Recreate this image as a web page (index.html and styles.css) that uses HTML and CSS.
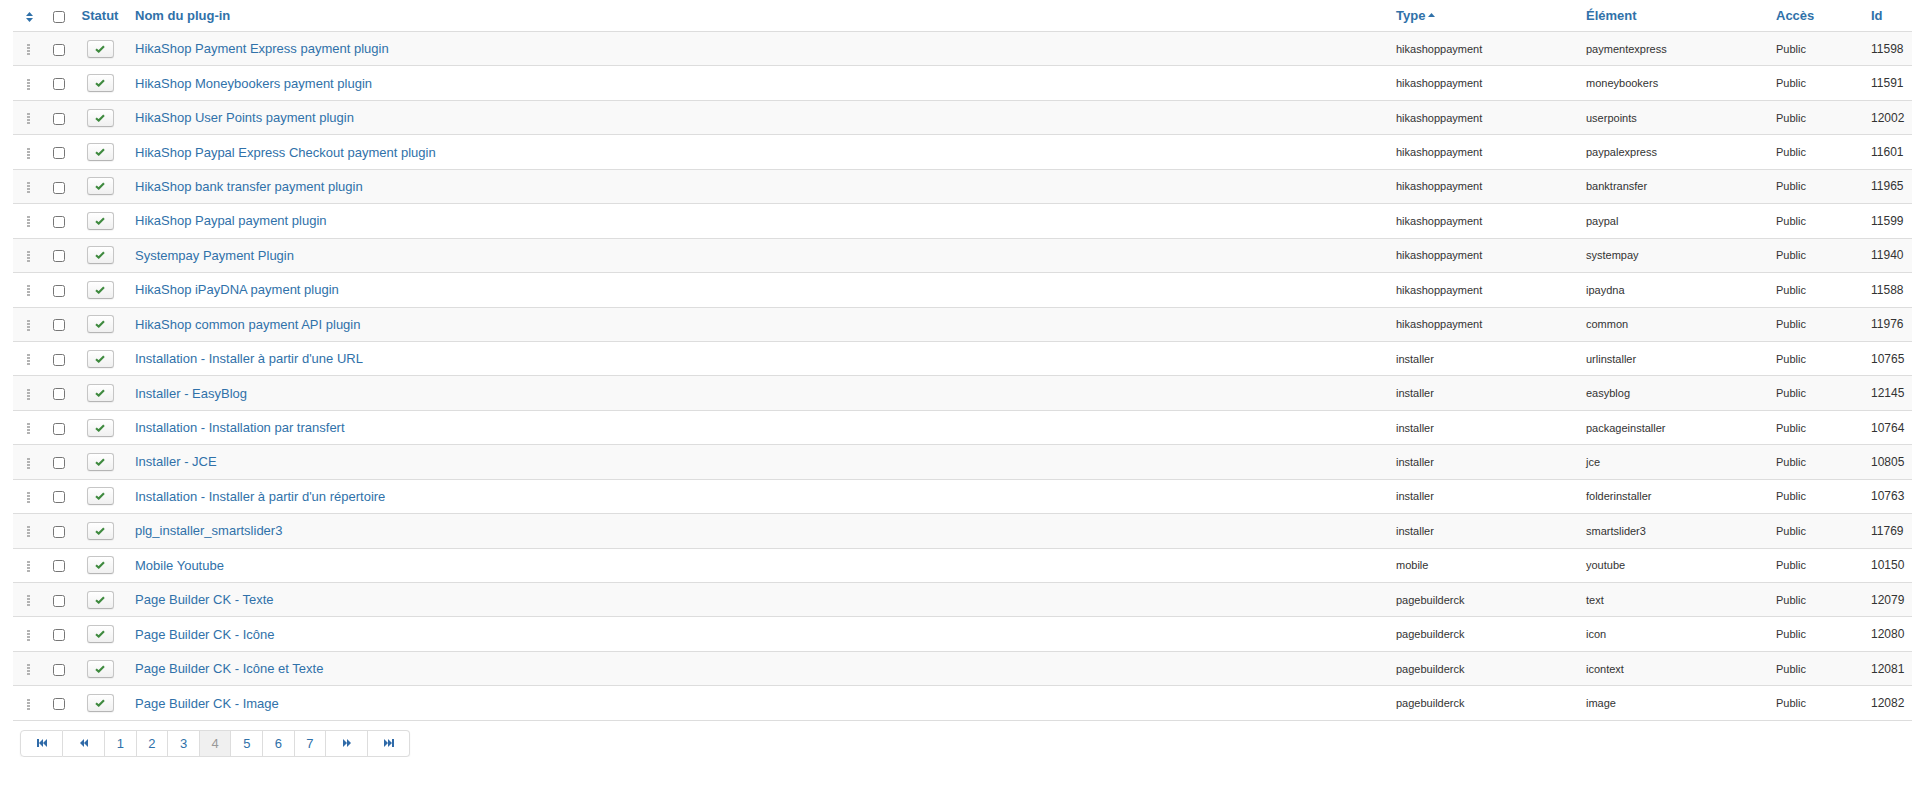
FILE: index.html
```html
<!DOCTYPE html>
<html lang="fr">
<head>
    <meta charset="UTF-8">
    <title>Plug-ins</title>
    <link rel="stylesheet" href="styles.css">
</head>
<body>
    <svg class="defs" width="0" height="0">
        <symbol id="ico-check" viewBox="0 0 10 8">
            <polyline points="1,4.2 3.7,6.6 9,1.2" fill="none" stroke="#3f8a3f" stroke-width="2.1"/>
        </symbol>
        <symbol id="ico-drag" viewBox="0 0 3 11">
            <rect x="0" y="0" width="3" height="2"/>
            <rect x="0" y="3" width="3" height="2"/>
            <rect x="0" y="6" width="3" height="2"/>
            <rect x="0" y="9" width="3" height="2"/>
        </symbol>
    </svg>

    <div class="list-wrap">
        <table class="plugin-list">
            <colgroup>
                <col class="c-order">
                <col class="c-check">
                <col class="c-status">
                <col>
                <col class="c-type">
                <col class="c-elem">
                <col class="c-access">
                <col class="c-id">
            </colgroup>
            <thead>
                <tr>
                    <th class="center">
                        <svg class="sort-ico" width="7" height="10" viewBox="0 0 7 10"><polygon points="3.5,0 7,4 0,4"/><polygon points="0,6 7,6 3.5,10"/></svg>
                    </th>
                    <th class="center"><input type="checkbox"></th>
                    <th class="center">Statut</th>
                    <th>Nom du plug-in</th>
                    <th>Type <svg class="caret" width="7" height="4" viewBox="0 0 7 4"><polygon points="3.5,0 7,4 0,4"/></svg></th>
                    <th>Élément</th>
                    <th>Accès</th>
                    <th>Id</th>
                </tr>
            </thead>
            <tbody>
                <tr><td class="center order"><svg class="drag"><use href="#ico-drag"/></svg></td><td class="center"><input type="checkbox"></td><td class="center"><span class="btn-micro"><svg><use href="#ico-check"/></svg></span></td><td><a href="#">HikaShop Payment Express payment plugin</a></td><td class="small">hikashoppayment</td><td class="small">paymentexpress</td><td class="small">Public</td><td class="id">11598</td></tr>
                <tr><td class="center order"><svg class="drag"><use href="#ico-drag"/></svg></td><td class="center"><input type="checkbox"></td><td class="center"><span class="btn-micro"><svg><use href="#ico-check"/></svg></span></td><td><a href="#">HikaShop Moneybookers payment plugin</a></td><td class="small">hikashoppayment</td><td class="small">moneybookers</td><td class="small">Public</td><td class="id">11591</td></tr>
                <tr><td class="center order"><svg class="drag"><use href="#ico-drag"/></svg></td><td class="center"><input type="checkbox"></td><td class="center"><span class="btn-micro"><svg><use href="#ico-check"/></svg></span></td><td><a href="#">HikaShop User Points payment plugin</a></td><td class="small">hikashoppayment</td><td class="small">userpoints</td><td class="small">Public</td><td class="id">12002</td></tr>
                <tr><td class="center order"><svg class="drag"><use href="#ico-drag"/></svg></td><td class="center"><input type="checkbox"></td><td class="center"><span class="btn-micro"><svg><use href="#ico-check"/></svg></span></td><td><a href="#">HikaShop Paypal Express Checkout payment plugin</a></td><td class="small">hikashoppayment</td><td class="small">paypalexpress</td><td class="small">Public</td><td class="id">11601</td></tr>
                <tr><td class="center order"><svg class="drag"><use href="#ico-drag"/></svg></td><td class="center"><input type="checkbox"></td><td class="center"><span class="btn-micro"><svg><use href="#ico-check"/></svg></span></td><td><a href="#">HikaShop bank transfer payment plugin</a></td><td class="small">hikashoppayment</td><td class="small">banktransfer</td><td class="small">Public</td><td class="id">11965</td></tr>
                <tr><td class="center order"><svg class="drag"><use href="#ico-drag"/></svg></td><td class="center"><input type="checkbox"></td><td class="center"><span class="btn-micro"><svg><use href="#ico-check"/></svg></span></td><td><a href="#">HikaShop Paypal payment plugin</a></td><td class="small">hikashoppayment</td><td class="small">paypal</td><td class="small">Public</td><td class="id">11599</td></tr>
                <tr><td class="center order"><svg class="drag"><use href="#ico-drag"/></svg></td><td class="center"><input type="checkbox"></td><td class="center"><span class="btn-micro"><svg><use href="#ico-check"/></svg></span></td><td><a href="#">Systempay Payment Plugin</a></td><td class="small">hikashoppayment</td><td class="small">systempay</td><td class="small">Public</td><td class="id">11940</td></tr>
                <tr><td class="center order"><svg class="drag"><use href="#ico-drag"/></svg></td><td class="center"><input type="checkbox"></td><td class="center"><span class="btn-micro"><svg><use href="#ico-check"/></svg></span></td><td><a href="#">HikaShop iPayDNA payment plugin</a></td><td class="small">hikashoppayment</td><td class="small">ipaydna</td><td class="small">Public</td><td class="id">11588</td></tr>
                <tr><td class="center order"><svg class="drag"><use href="#ico-drag"/></svg></td><td class="center"><input type="checkbox"></td><td class="center"><span class="btn-micro"><svg><use href="#ico-check"/></svg></span></td><td><a href="#">HikaShop common payment API plugin</a></td><td class="small">hikashoppayment</td><td class="small">common</td><td class="small">Public</td><td class="id">11976</td></tr>
                <tr><td class="center order"><svg class="drag"><use href="#ico-drag"/></svg></td><td class="center"><input type="checkbox"></td><td class="center"><span class="btn-micro"><svg><use href="#ico-check"/></svg></span></td><td><a href="#">Installation - Installer à partir d'une URL</a></td><td class="small">installer</td><td class="small">urlinstaller</td><td class="small">Public</td><td class="id">10765</td></tr>
                <tr><td class="center order"><svg class="drag"><use href="#ico-drag"/></svg></td><td class="center"><input type="checkbox"></td><td class="center"><span class="btn-micro"><svg><use href="#ico-check"/></svg></span></td><td><a href="#">Installer - EasyBlog</a></td><td class="small">installer</td><td class="small">easyblog</td><td class="small">Public</td><td class="id">12145</td></tr>
                <tr><td class="center order"><svg class="drag"><use href="#ico-drag"/></svg></td><td class="center"><input type="checkbox"></td><td class="center"><span class="btn-micro"><svg><use href="#ico-check"/></svg></span></td><td><a href="#">Installation - Installation par transfert</a></td><td class="small">installer</td><td class="small">packageinstaller</td><td class="small">Public</td><td class="id">10764</td></tr>
                <tr><td class="center order"><svg class="drag"><use href="#ico-drag"/></svg></td><td class="center"><input type="checkbox"></td><td class="center"><span class="btn-micro"><svg><use href="#ico-check"/></svg></span></td><td><a href="#">Installer - JCE</a></td><td class="small">installer</td><td class="small">jce</td><td class="small">Public</td><td class="id">10805</td></tr>
                <tr><td class="center order"><svg class="drag"><use href="#ico-drag"/></svg></td><td class="center"><input type="checkbox"></td><td class="center"><span class="btn-micro"><svg><use href="#ico-check"/></svg></span></td><td><a href="#">Installation - Installer à partir d'un répertoire</a></td><td class="small">installer</td><td class="small">folderinstaller</td><td class="small">Public</td><td class="id">10763</td></tr>
                <tr><td class="center order"><svg class="drag"><use href="#ico-drag"/></svg></td><td class="center"><input type="checkbox"></td><td class="center"><span class="btn-micro"><svg><use href="#ico-check"/></svg></span></td><td><a href="#">plg_installer_smartslider3</a></td><td class="small">installer</td><td class="small">smartslider3</td><td class="small">Public</td><td class="id">11769</td></tr>
                <tr><td class="center order"><svg class="drag"><use href="#ico-drag"/></svg></td><td class="center"><input type="checkbox"></td><td class="center"><span class="btn-micro"><svg><use href="#ico-check"/></svg></span></td><td><a href="#">Mobile Youtube</a></td><td class="small">mobile</td><td class="small">youtube</td><td class="small">Public</td><td class="id">10150</td></tr>
                <tr><td class="center order"><svg class="drag"><use href="#ico-drag"/></svg></td><td class="center"><input type="checkbox"></td><td class="center"><span class="btn-micro"><svg><use href="#ico-check"/></svg></span></td><td><a href="#">Page Builder CK - Texte</a></td><td class="small">pagebuilderck</td><td class="small">text</td><td class="small">Public</td><td class="id">12079</td></tr>
                <tr><td class="center order"><svg class="drag"><use href="#ico-drag"/></svg></td><td class="center"><input type="checkbox"></td><td class="center"><span class="btn-micro"><svg><use href="#ico-check"/></svg></span></td><td><a href="#">Page Builder CK - Icône</a></td><td class="small">pagebuilderck</td><td class="small">icon</td><td class="small">Public</td><td class="id">12080</td></tr>
                <tr><td class="center order"><svg class="drag"><use href="#ico-drag"/></svg></td><td class="center"><input type="checkbox"></td><td class="center"><span class="btn-micro"><svg><use href="#ico-check"/></svg></span></td><td><a href="#">Page Builder CK - Icône et Texte</a></td><td class="small">pagebuilderck</td><td class="small">icontext</td><td class="small">Public</td><td class="id">12081</td></tr>
                <tr><td class="center order"><svg class="drag"><use href="#ico-drag"/></svg></td><td class="center"><input type="checkbox"></td><td class="center"><span class="btn-micro"><svg><use href="#ico-check"/></svg></span></td><td><a href="#">Page Builder CK - Image</a></td><td class="small">pagebuilderck</td><td class="small">image</td><td class="small">Public</td><td class="id">12082</td></tr>
            </tbody>
        </table>

        <!-- pagination -->
        <ul class="pagination">
            <li><a href="#" class="nav-ico"><svg width="10" height="8" viewBox="0 0 10 8"><rect x="0" y="0" width="2" height="8"/><polygon points="2,4 6,0 6,8"/><polygon points="6,4 10,0 10,8"/></svg></a></li>
            <li><a href="#" class="nav-ico"><svg width="8" height="8" viewBox="0 0 8 8"><polygon points="0,4 4,0 4,8"/><polygon points="4,4 8,0 8,8"/></svg></a></li>
            <li><a href="#">1</a></li>
            <li><a href="#">2</a></li>
            <li><a href="#">3</a></li>
            <li><span class="active">4</span></li>
            <li><a href="#">5</a></li>
            <li><a href="#">6</a></li>
            <li><a href="#">7</a></li>
            <li><a href="#" class="nav-ico"><svg width="8" height="8" viewBox="0 0 8 8"><polygon points="0,0 4,4 0,8"/><polygon points="4,0 8,4 4,8"/></svg></a></li>
            <li><a href="#" class="nav-ico"><svg width="10" height="8" viewBox="0 0 10 8"><polygon points="0,0 4,4 0,8"/><polygon points="4,0 8,4 4,8"/><rect x="8" y="0" width="2" height="8"/></svg></a></li>
        </ul>
    </div>
</body>
</html>
```

FILE: styles.css
```css
body {
    margin: 0;
    font-family: 'Liberation Sans', Arial, sans-serif;
    font-size: 13px;
    color: #333;
    background-color: #fff;
}

a {
    color: #3071a9;
    text-decoration: none;
}

.defs {
    position: absolute;
}

.list-wrap {
    padding: 0 7px 0 13px;
}

.plugin-list {
    width: 100%;
    border-collapse: collapse;
    table-layout: fixed;
}

.c-order { width: 32px; }
.c-check { width: 28px; }
.c-status { width: 54px; }
.c-type { width: 190px; }
.c-elem { width: 190px; }
.c-access { width: 95px; }
.c-id { width: 49px; }

.plugin-list th {
    height: 31px;
    padding: 0 8px;
    text-align: left;
    vertical-align: middle;
    font-weight: bold;
    color: #3071a9;
    white-space: nowrap;
}

.plugin-list td {
    height: 34.45px;
    padding: 0 8px;
    vertical-align: middle;
    border-top: 1px solid #ddd;
    white-space: nowrap;
    box-sizing: border-box;
}

.plugin-list tbody tr:nth-child(odd) td {
    background-color: #f9f9f9;
}

.plugin-list tbody tr:last-child td {
    border-bottom: 1px solid #ddd;
}

.plugin-list .center {
    text-align: center;
    padding: 0;
}

.plugin-list .order {
    padding-right: 2px;
}

.plugin-list input[type="checkbox"] {
    margin: 0;
    width: 12px;
    height: 12px;
    vertical-align: middle;
}

.sort-ico {
    fill: #3071a9;
    vertical-align: middle;
}

.caret {
    fill: #3071a9;
    vertical-align: 3px;
    margin-left: -1px;
}

.drag {
    width: 3px;
    height: 11px;
    fill: #b3b3b3;
    vertical-align: middle;
}

.btn-micro {
    display: inline-flex;
    align-items: center;
    justify-content: center;
    width: 27px;
    height: 18px;
    box-sizing: border-box;
    border: 1px solid #c6c6c6;
    border-bottom-color: #b5b5b5;
    border-radius: 3px;
    background: linear-gradient(#ffffff, #f0f0f0);
    box-shadow: 0 1px 1px rgba(0, 0, 0, 0.05);
    vertical-align: middle;
}

.btn-micro svg {
    width: 10px;
    height: 8px;
}

.small {
    font-size: 11px;
}

.id {
    font-size: 12px;
}

.pagination {
    display: inline-flex;
    list-style: none;
    margin: 9px 0 0 7px;
    padding: 0;
    border-radius: 4px;
    box-shadow: 0 1px 2px rgba(0, 0, 0, 0.05);
}

.pagination li a,
.pagination li span {
    display: block;
    padding: 4px 11.7px;
    line-height: 17px;
    font-size: 13px;
    text-align: center;
    border: 1px solid #ddd;
    border-left-width: 0;
}

.pagination li:first-child a {
    border-left-width: 1px;
    border-radius: 4px 0 0 4px;
}

.pagination li:last-child a {
    border-radius: 0 4px 4px 0;
}

.pagination .active {
    color: #999;
    background-color: #f0f0f0;
}

.pagination li .nav-ico {
    width: 17px;
    height: 17px;
    padding: 4px 12px;
    display: flex;
    align-items: center;
    justify-content: center;
}

.pagination .nav-ico svg {
    fill: #2f6aa8;
}
```
